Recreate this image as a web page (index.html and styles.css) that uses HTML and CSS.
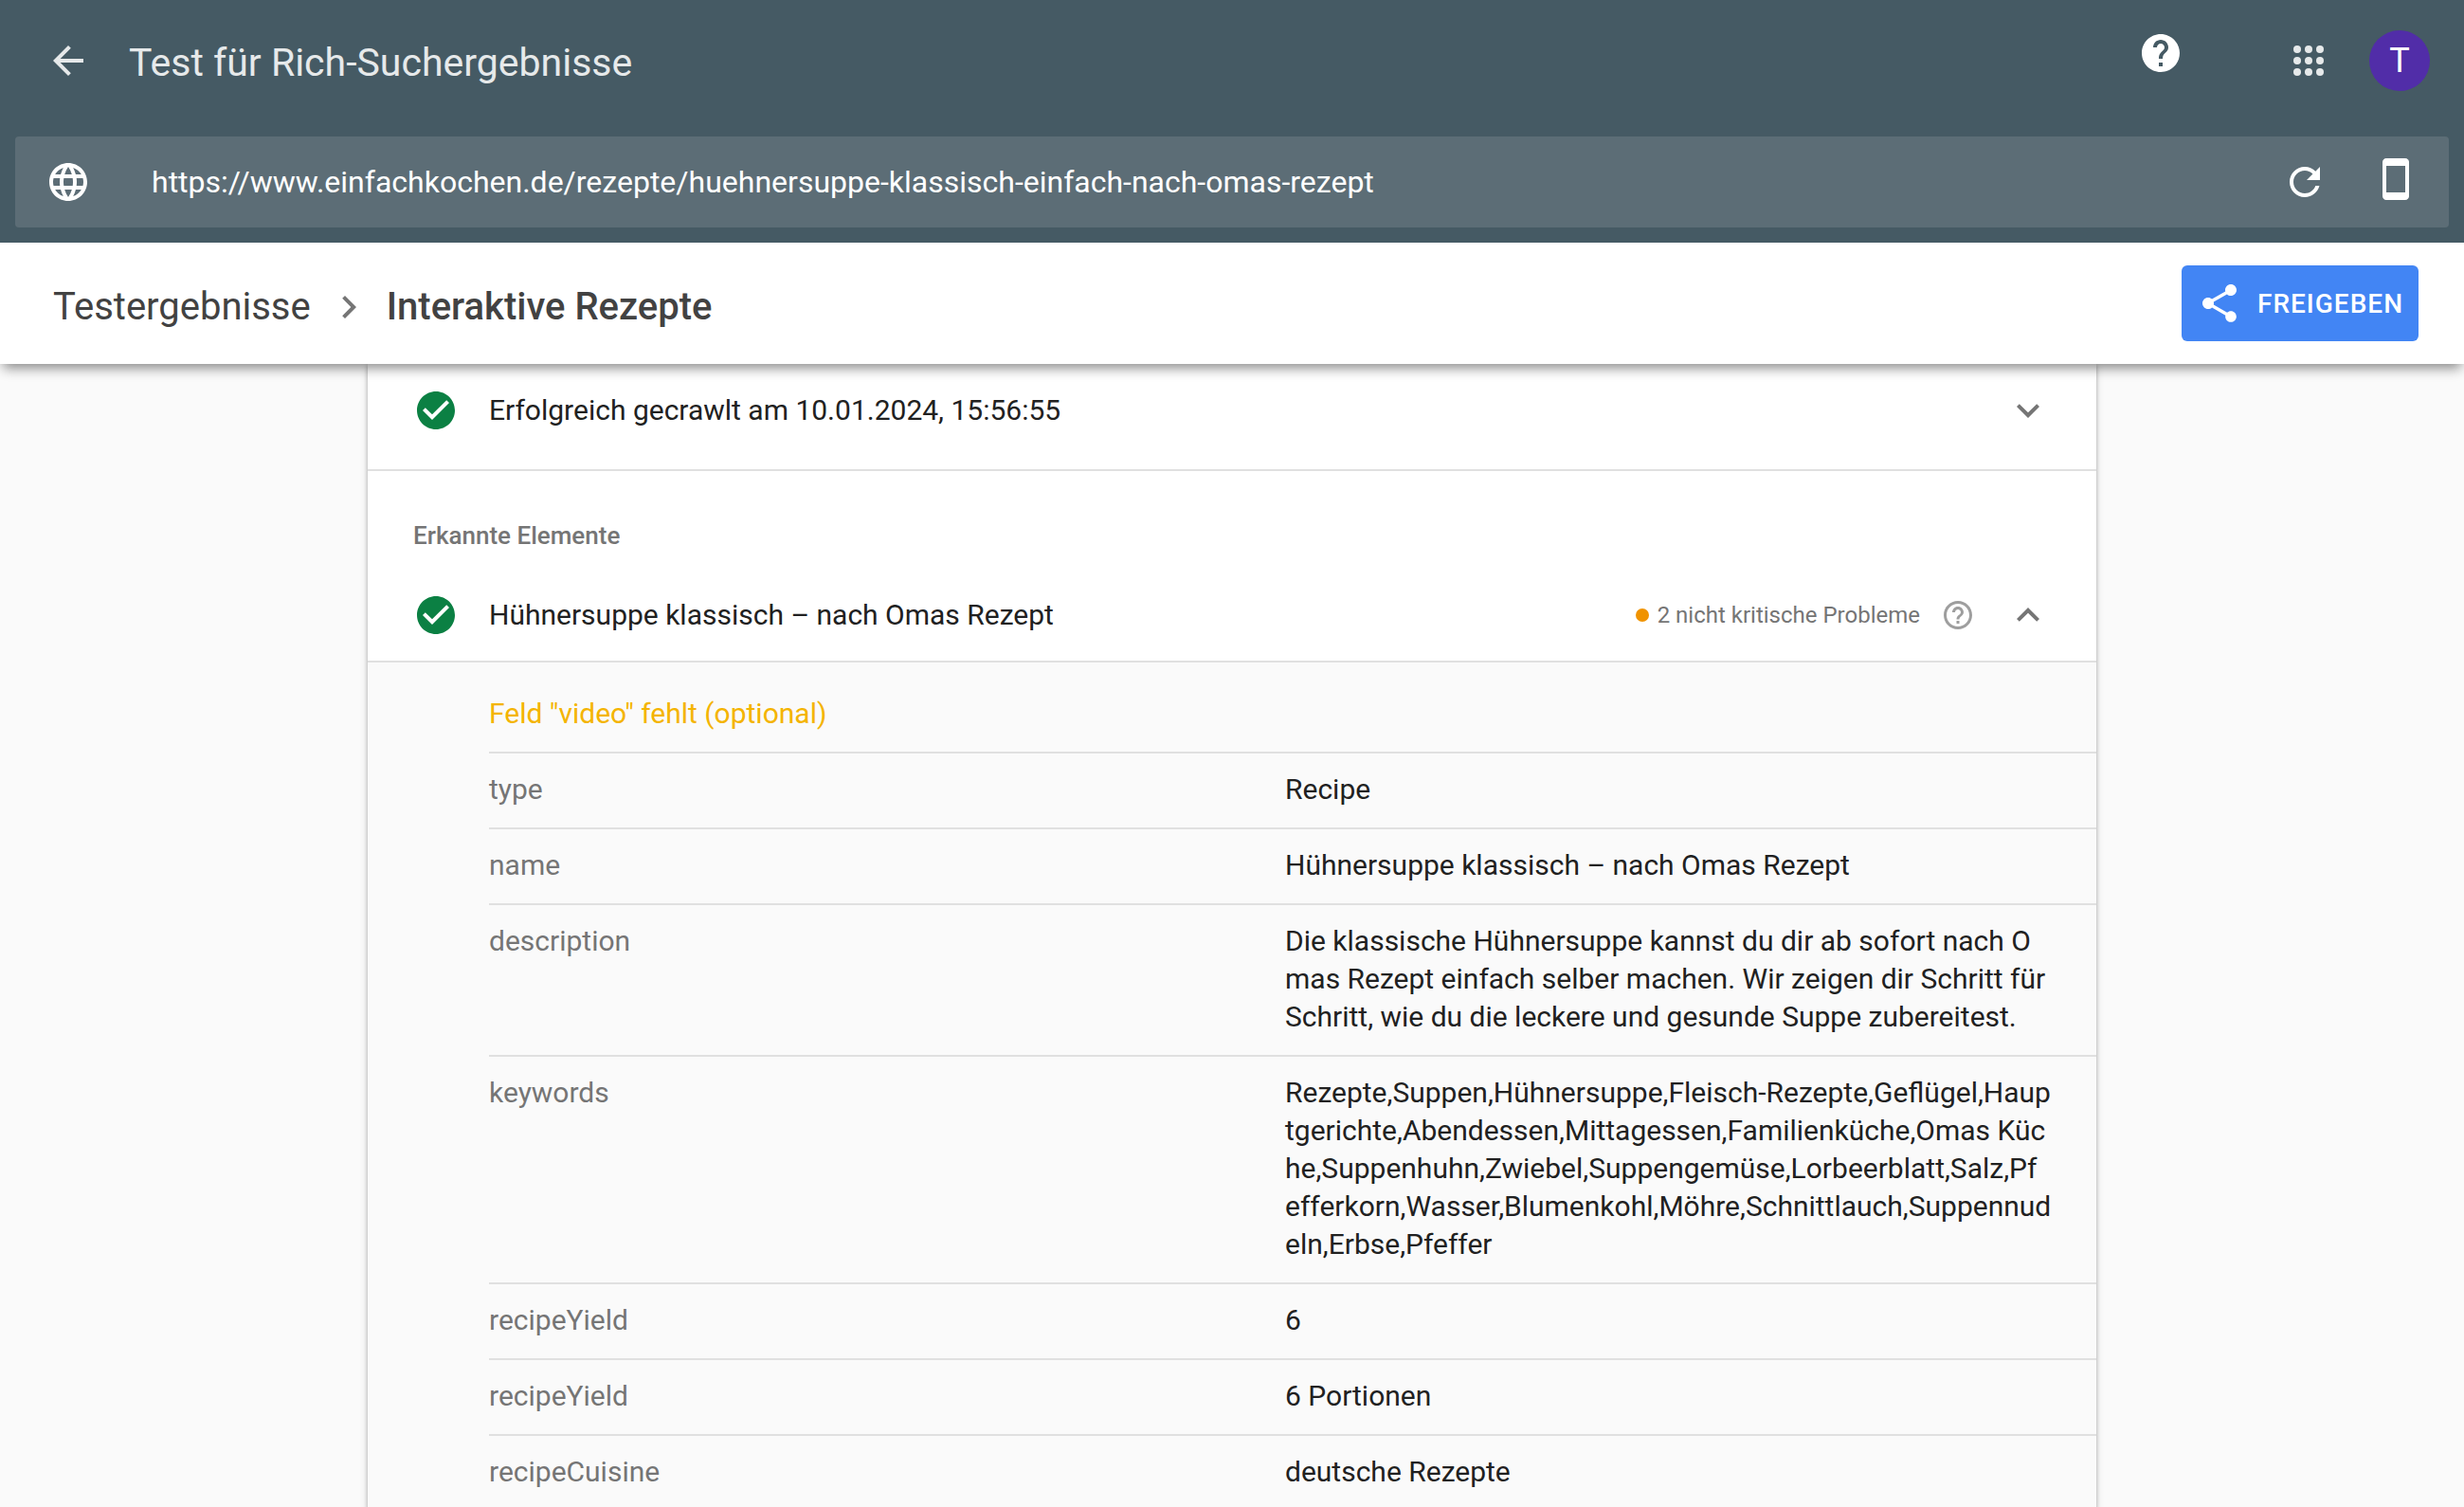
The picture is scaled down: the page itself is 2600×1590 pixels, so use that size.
FILE: index.html
```html
<!DOCTYPE html>
<html lang="de">
<head>
<meta charset="utf-8">
<meta name="viewport" content="width=device-width, initial-scale=1">
<title>Test für Rich-Suchergebnisse</title>
<link rel="stylesheet" href="styles.css">
</head>
<body>
<header class="top">
  <div class="appbar">
    <a class="icon-link" href="#" aria-label="Zurück"><svg class="icon soft" viewBox="0 0 24 24"><path d="M20 11H7.830l5.590-5.590L12 4l-8 8 8 8 1.410-1.410L7.830 13H20v-2z"/></svg></a>
    <h1 class="title">Test für Rich-Suchergebnisse</h1>
    <button class="icon-button help" type="button" aria-label="Hilfe"><svg class="icon" viewBox="0 0 24 24"><path d="M12 2C6.480 2 2 6.480 2 12s4.480 10 10 10 10-4.480 10-10S17.520 2 12 2zm1 17h-2v-2h2v2zm2.070-7.750l-.9.920C13.450 12.900 13 13.500 13 15h-2v-.5c0-1.100.45-2.100 1.170-2.830l1.240-1.260c.37-.36.59-.86.59-1.410 0-1.100-.9-2-2-2s-2 .9-2 2H8c0-2.210 1.790-4 4-4s4 1.790 4 4c0 .88-.36 1.680-.93 2.250z"/></svg></button>
    <button class="icon-button" type="button" aria-label="Google-Apps"><svg class="icon soft" viewBox="0 0 24 24"><circle cx="6" cy="6" r="2"/><circle cx="12" cy="6" r="2"/><circle cx="18" cy="6" r="2"/><circle cx="6" cy="12" r="2"/><circle cx="12" cy="12" r="2"/><circle cx="18" cy="12" r="2"/><circle cx="6" cy="18" r="2"/><circle cx="12" cy="18" r="2"/><circle cx="18" cy="18" r="2"/></svg></button>
    <button class="avatar" type="button">T</button>
  </div>
  <form class="urlbar">
    <label class="url-label" for="url" aria-label="URL"><svg class="icon" viewBox="0 0 24 24"><path d="M11.990 2C6.470 2 2 6.480 2 12s4.470 10 9.990 10C17.520 22 22 17.520 22 12S17.520 2 11.990 2zm6.930 6h-2.950c-.32-1.250-.78-2.450-1.380-3.560 1.840.63 3.370 1.910 4.330 3.560zM12 4.040c.83 1.200 1.480 2.530 1.910 3.960h-3.820c.43-1.430 1.080-2.760 1.910-3.960zM4.260 14C4.100 13.360 4 12.690 4 12s.1-1.360.26-2h3.380c-.08.66-.14 1.320-.14 2 0 .68.06 1.340.14 2H4.260zm.82 2h2.950c.32 1.250.78 2.450 1.380 3.560-1.840-.63-3.370-1.900-4.330-3.560zm2.950-8H5.080c.96-1.660 2.490-2.930 4.330-3.560C8.810 5.550 8.350 6.750 8.030 8zM12 19.960c-.83-1.200-1.480-2.530-1.910-3.960h3.820c-.43 1.430-1.080 2.760-1.910 3.960zM14.340 14H9.660c-.09-.66-.16-1.320-.16-2 0-.68.07-1.350.16-2h4.680c.09.65.16 1.320.16 2 0 .68-.07 1.340-.16 2zm.25 5.560c.6-1.110 1.060-2.310 1.380-3.560h2.950c-.96 1.650-2.490 2.930-4.330 3.560zM16.360 14c.08-.66.14-1.320.14-2 0-.68-.06-1.340-.14-2h3.380c.16.64.26 1.310.26 2s-.1 1.360-.26 2h-3.380z"/></svg></label>
    <input class="url" id="url" type="text" value="https://www.einfachkochen.de/rezepte/huehnersuppe-klassisch-einfach-nach-omas-rezept">
    <button class="icon-button" type="button" aria-label="Erneut testen"><svg class="icon" viewBox="0 0 24 24"><path d="M17.650 6.350C16.200 4.900 14.210 4 12 4c-4.420 0-7.990 3.580-7.990 8s3.570 8 7.990 8c3.730 0 6.840-2.550 7.730-6h-2.080c-.82 2.330-3.040 4-5.650 4-3.310 0-6-2.690-6-6s2.690-6 6-6c1.660 0 3.140.69 4.220 1.780L13 11h7V4l-2.350 2.350z"/></svg></button>
    <button class="icon-button device" type="button" aria-label="Smartphone"><svg class="icon" viewBox="0 0 24 24"><path d="M17 1H7c-1.100 0-2 .9-2 2v18c0 1.100.9 2 2 2h10c1.100 0 2-.9 2-2V3c0-1.100-.9-2-2-2zm0 18H7V5h10v14z"/></svg></button>
  </form>
  <div class="subbar">
    <nav class="crumbs">
      <a class="crumb" href="#">Testergebnisse</a>
      <svg class="icon grey" viewBox="0 0 24 24"><path d="M10 6L8.590 7.410 13.170 12l-4.580 4.590L10 18l6-6z"/></svg>
      <span class="crumb current">Interaktive Rezepte</span>
    </nav>
    <button class="share" type="button"><svg class="icon" viewBox="0 0 24 24"><path d="M18 16.080c-.76 0-1.440.3-1.960.77L8.910 12.700c.05-.23.09-.46.09-.7s-.04-.47-.09-.7l7.050-4.110c.54.5 1.250.81 2.040.81 1.660 0 3-1.340 3-3s-1.340-3-3-3-3 1.340-3 3c0 .24.04.47.09.7L8.040 9.810C7.500 9.310 6.790 9 6 9c-1.660 0-3 1.340-3 3s1.340 3 3 3c.79 0 1.500-.31 2.040-.81l7.120 4.160c-.05.21-.08.43-.08.65 0 1.610 1.310 2.920 2.920 2.920s2.920-1.310 2.920-2.920-1.310-2.920-2.920-2.920z"/></svg>FREIGEBEN</button>
  </div>
</header>
<main class="main">
  <div class="card">
    <section class="crawl row">
      <svg class="icon ok" viewBox="0 0 24 24"><path d="M12 2C6.480 2 2 6.480 2 12s4.480 10 10 10 10-4.480 10-10S17.520 2 12 2zm-2 15l-5-5 1.410-1.410L10 14.170l7.590-7.590L19 8l-9 9z"/></svg>
      <span class="row-text">Erfolgreich gecrawlt am 10.01.2024, 15:56:55</span>
      <button class="icon-button" type="button" aria-label="Maximieren"><svg class="icon grey" viewBox="0 0 24 24"><path d="M16.590 8.590L12 13.170 7.410 8.590 6 10l6 6 6-6z"/></svg></button>
    </section>
    <section class="detected">
      <h2 class="subhead">Erkannte Elemente</h2>
      <div class="row item">
        <svg class="icon ok" viewBox="0 0 24 24"><path d="M12 2C6.480 2 2 6.480 2 12s4.480 10 10 10 10-4.480 10-10S17.520 2 12 2zm-2 15l-5-5 1.410-1.410L10 14.170l7.590-7.590L19 8l-9 9z"/></svg>
        <span class="row-text">Hühnersuppe klassisch – nach Omas Rezept</span>
        <span class="dot"></span>
        <span class="issues">2 nicht kritische Probleme</span>
        <button class="icon-button hint" type="button" aria-label="Info"><svg class="icon small" viewBox="0 0 24 24"><path d="M11 18h2v-2h-2v2zm1-16C6.480 2 2 6.480 2 12s4.480 10 10 10 10-4.480 10-10S17.520 2 12 2zm0 18c-4.410 0-8-3.590-8-8s3.590-8 8-8 8 3.590 8 8-3.590 8-8 8zm0-14c-2.210 0-4 1.790-4 4h2c0-1.100.9-2 2-2s2 .9 2 2c0 2-3 1.750-3 5h2c0-2.250 3-2.500 3-5 0-2.210-1.790-4-4-4z"/></svg></button>
        <button class="icon-button" type="button" aria-label="Minimieren"><svg class="icon grey" viewBox="0 0 24 24"><path d="M12 8l-6 6 1.410 1.410L12 10.830l4.590 4.580L18 14z"/></svg></button>
      </div>
    </section>
    <section class="details">
      <p class="warning">Feld "video" fehlt (optional)</p>
      <table class="props">
        <tbody>
        <tr><th scope="row">type</th><td>Recipe</td></tr>
        <tr><th scope="row">name</th><td>Hühnersuppe klassisch – nach Omas Rezept</td></tr>
        <tr><th scope="row">description</th><td>Die klassische Hühnersuppe kannst du dir ab sofort nach Omas Rezept einfach selber machen. Wir zeigen dir Schritt für Schritt, wie du die leckere und gesunde Suppe zubereitest.</td></tr>
        <tr><th scope="row">keywords</th><td>Rezepte,Suppen,Hühnersuppe,Fleisch-Rezepte,Geflügel,Hauptgerichte,Abendessen,Mittagessen,Familienküche,Omas Küche,Suppenhuhn,Zwiebel,Suppengemüse,Lorbeerblatt,Salz,Pf<br>efferkorn,Wasser,Blumenkohl,Möhre,Schnittlauch,Suppennudeln,Erbse,Pfeffer</td></tr>
        <tr><th scope="row">recipeYield</th><td>6</td></tr>
        <tr><th scope="row">recipeYield</th><td>6 Portionen</td></tr>
        <tr><th scope="row">recipeCuisine</th><td>deutsche Rezepte</td></tr>
        </tbody>
      </table>
    </section>
  </div>
</main>
</body>
</html>
```

FILE: styles.css
```css
* { box-sizing: border-box; }

body {
  margin: 0;
  height: 100vh;
  display: flex;
  flex-direction: column;
  background: #fafafa;
  color: #212121;
  font: 400 30px/40px Roboto, sans-serif;
}

h1, h2, p { margin: 0; }

button {
  margin: 0;
  padding: 0;
  border: 0;
  background: none;
  font-family: inherit;
  cursor: pointer;
}

.icon {
  display: block;
  flex: none;
  width: 48px;
  height: 48px;
  fill: #fff;
}
.icon.soft { fill: #e6e9ea; }
.icon.grey { fill: #757575; }
.icon.ok { fill: #0b8043; }
.icon.small { width: 36px; height: 36px; fill: #9e9e9e; }
.icon-button { flex: none; }

.top {
  position: relative;
  z-index: 1;
  flex: none;
  background: #455a64;
  box-shadow: 0 8px 12px -4px rgba(0, 0, 0, .4), 0 2px 16px rgba(0, 0, 0, .12);
}

.appbar {
  display: flex;
  align-items: center;
  height: 128px;
  padding: 0 36px 0 48px;
}
.title {
  flex: 1;
  margin-left: 40px;
  padding-top: 4px;
  color: #e6e9ea;
  font-size: 41px;
  font-weight: 400;
  line-height: 48px;
}
.help { margin-right: 108px; padding-bottom: 16px; }
.avatar {
  width: 64px;
  height: 64px;
  margin-left: 40px;
  border-radius: 50%;
  background: #512da8;
  color: #fff;
  font-size: 36px;
}

.urlbar {
  display: flex;
  align-items: center;
  height: 96px;
  margin: 16px;
  padding: 0 32px;
  border-radius: 4px;
  background: #5c6d76;
}
.url {
  flex: 1;
  min-width: 0;
  margin: 0 32px;
  padding: 0 0 0 32px;
  border: 0;
  outline: 0;
  background: none;
  color: #fff;
  font: 400 32px/48px Roboto, sans-serif;
}
.device { margin-left: 48px; padding-bottom: 6px; }

.subbar {
  display: flex;
  align-items: center;
  justify-content: space-between;
  height: 128px;
  padding: 0 48px 0 56px;
  background: #fff;
}
.crumbs {
  display: flex;
  align-items: center;
  gap: 16px;
  padding-top: 8px;
}
.crumb {
  color: #424242;
  font-size: 40px;
  line-height: 48px;
  text-decoration: none;
}
.current { font-weight: 500; }
.share {
  display: flex;
  align-items: center;
  gap: 16px;
  height: 80px;
  padding: 0 16px;
  border-radius: 6px;
  background: #4285f4;
  color: #fff;
  font-size: 28px;
  font-weight: 500;
  letter-spacing: 1px;
}

.main {
  flex: 1;
  min-height: 0;
  overflow-y: auto;
  scrollbar-width: none;
}
.card {
  width: calc(100% - 776px);
  min-width: 960px;
  margin: 0 auto;
  background: #fff;
  box-shadow: 0 2px 4px rgba(0, 0, 0, .24), 0 0 8px rgba(0, 0, 0, .16);
}
.row {
  display: flex;
  align-items: center;
  padding: 0 48px;
}
.row-text { flex: 1; margin-left: 32px; }
.crawl {
  height: 113px;
  padding-bottom: 14px;
  border-bottom: 2px solid #e0e0e0;
}
.subhead {
  padding: 48px 48px 0;
  color: #757575;
  font-size: 26px;
  font-weight: 500;
  line-height: 40px;
}
.item {
  height: 114px;
  padding-top: 16px;
  border-bottom: 2px solid #e0e0e0;
}
.dot {
  width: 14px;
  height: 14px;
  border-radius: 50%;
  background: #f09300;
}
.issues {
  margin: 0 22px 0 9px;
  color: #757575;
  font-size: 24px;
}
.hint { margin-right: 32px; }

.details {
  padding-left: 128px;
  background: #fafafa;
}
.warning {
  padding: 34px 0 20px;
  border-bottom: 2px solid #e0e0e0;
  color: #f4b400;
}
.props,
.props tbody { display: block; }
.props tr {
  display: grid;
  grid-template-columns: 840fr 809fr;
  padding: 18px 47px 20px 0;
  border-bottom: 2px solid #e0e0e0;
}
.props th,
.props td {
  padding: 0;
  text-align: left;
  font-weight: 400;
}
.props th { color: #757575; }
.props td { word-break: break-all; }
```
